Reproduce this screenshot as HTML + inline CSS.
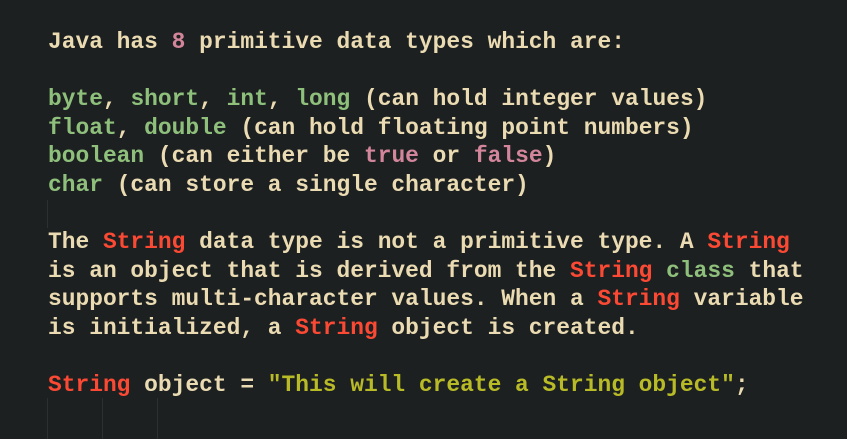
<!DOCTYPE html>
<html><head><meta charset="utf-8"><style>
html,body{margin:0;padding:0;background:#1d2021;width:847px;height:439px;overflow:hidden}
pre{position:absolute;left:48px;top:28px;margin:0;font-family:"Liberation Mono",monospace;font-weight:bold;font-size:22.9px;line-height:28.6px;color:#ebdbb2;white-space:pre}
.g{color:#8ec07c}.p{color:#d3869b}.r{color:#fb4934}.y{color:#b8bb26}
.ig{position:absolute;width:1px;background:#2c3030}
</style></head><body>
<div class="ig" style="left:47px;top:200px;height:28px"></div>
<div class="ig" style="left:47px;top:398px;height:41px"></div>
<div class="ig" style="left:102px;top:398px;height:41px"></div>
<div class="ig" style="left:157px;top:398px;height:41px"></div>
<pre>Java has <span class="p">8</span> primitive data types which are:

<span class="g">byte</span>, <span class="g">short</span>, <span class="g">int</span>, <span class="g">long</span> (can hold integer values)
<span class="g">float</span>, <span class="g">double</span> (can hold floating point numbers)
<span class="g">boolean</span> (can either be <span class="p">true</span> or <span class="p">false</span>)
<span class="g">char</span> (can store a single character)

The <span class="r">String</span> data type is not a primitive type. A <span class="r">String</span>
is an object that is derived from the <span class="r">String</span> <span class="g">class</span> that
supports multi-character values. When a <span class="r">String</span> variable
is initialized, a <span class="r">String</span> object is created.

<span class="r">String</span> object = <span class="y">"This will create a String object"</span>;</pre>
</body></html>
